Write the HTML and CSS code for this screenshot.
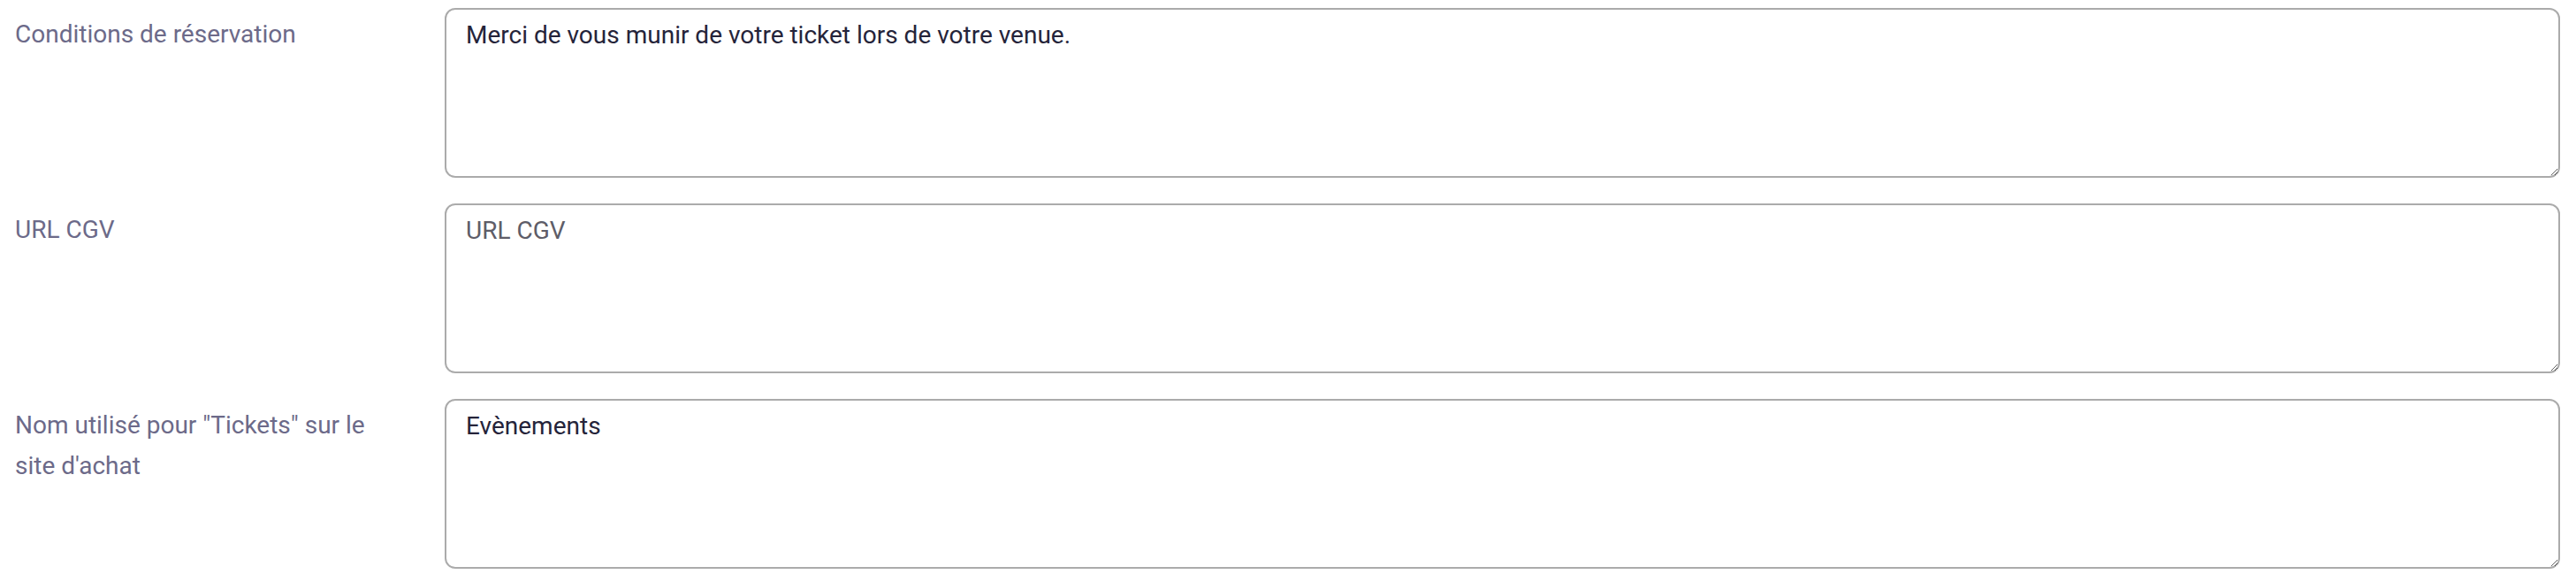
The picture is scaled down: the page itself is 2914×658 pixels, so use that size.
FILE: index.html
```html
<!DOCTYPE html>
<html lang="fr">
<head>
    <meta charset="UTF-8">
    <meta name="viewport" content="width=device-width, initial-scale=1.0">
    <title>Paramètres de réservation</title>
    <link rel="stylesheet" href="styles.css">
</head>
<body>
    <form class="settings-form">
        <div class="form-row">
            <label for="conditions" class="form-label">Conditions de réservation</label>
            <textarea id="conditions" class="form-input">Merci de vous munir de votre ticket lors de votre venue.</textarea>
        </div>
        <div class="form-row">
            <label for="urlCgv" class="form-label">URL CGV</label>
            <textarea id="urlCgv" class="form-input" placeholder="URL CGV"></textarea>
        </div>
        <div class="form-row">
            <label for="ticketName" class="form-label">Nom utilisé pour "Tickets" sur le site d'achat</label>
            <textarea id="ticketName" class="form-input">Evènements</textarea>
        </div>
    </form>
</body>
</html>
```

FILE: styles.css
```css
:root {
    --label-color: #6c6a89;
    --text-color: #25243a;
    --border-color: #ababab;
}

* {
    margin: 0;
    padding: 0;
    box-sizing: border-box;
}

body {
    font-family: Roboto, "Liberation Sans", sans-serif;
    background: #ffffff;
}

.settings-form {
    padding: 9px 18px 0 17px;
}

.form-row {
    display: grid;
    grid-template-columns: 486px 1fr;
    margin-bottom: 29px;
}

.form-label {
    color: var(--label-color);
    font-size: 28px;
    line-height: 46px;
    padding-top: 7px;
    padding-right: 60px;
}

.form-input {
    width: 100%;
    height: 192px;
    padding: 8px 22px;
    border: 2px solid var(--border-color);
    border-radius: 12px;
    font-family: Roboto, "Liberation Sans", sans-serif;
    font-size: 28px;
    line-height: 42px;
    color: var(--text-color);
    background: #ffffff;
    outline: none;
}

.form-input::placeholder {
    color: #5e5d68;
    opacity: 1;
}
```
